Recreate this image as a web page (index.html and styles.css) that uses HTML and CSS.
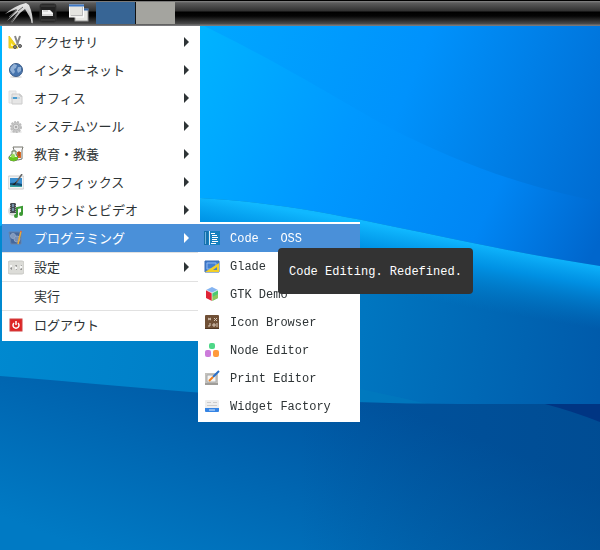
FILE: index.html
```
<!DOCTYPE html>
<html lang="ja">
<head>
<meta charset="UTF-8">
<title>LXDE</title>
<link rel="stylesheet" href="styles.css">
</head>
<body>

<!-- 壁紙 -->
<svg class="wallpaper" viewBox="0 0 600 550" preserveAspectRatio="none" aria-hidden="true">
  <defs>
    <linearGradient id="sky" gradientUnits="userSpaceOnUse" x1="190" y1="40" x2="600" y2="240">
      <stop offset="0" stop-color="#00b4ff"/>
      <stop offset=".4" stop-color="#0098ff"/>
      <stop offset=".75" stop-color="#0086f4"/>
      <stop offset="1" stop-color="#0066cc"/>
    </linearGradient>
    <linearGradient id="hill" gradientUnits="userSpaceOnUse" x1="200" y1="26" x2="600" y2="190">
      <stop offset="0" stop-color="#00a8ff"/>
      <stop offset=".5" stop-color="#0092fc"/>
      <stop offset="1" stop-color="#006cd2"/>
    </linearGradient>
    <linearGradient id="sea" gradientUnits="userSpaceOnUse" x1="0" y1="300" x2="600" y2="380">
      <stop offset="0" stop-color="#0089d0"/>
      <stop offset=".6" stop-color="#0076c0"/>
      <stop offset="1" stop-color="#005aaa"/>
    </linearGradient>
    <linearGradient id="glow" gradientUnits="userSpaceOnUse" x1="400" y1="229" x2="389" y2="294">
      <stop offset="0" stop-color="#10b8ff"/>
      <stop offset=".35" stop-color="#009cf0" stop-opacity=".8"/>
      <stop offset="1" stop-color="#0080cc" stop-opacity="0"/>
    </linearGradient>
    <linearGradient id="deep" gradientUnits="userSpaceOnUse" x1="330" y1="380" x2="240" y2="610">
      <stop offset="0" stop-color="#00539f"/>
      <stop offset="1" stop-color="#007ac4"/>
    </linearGradient>
    <linearGradient id="shade" x1="0" y1="0" x2="1" y2="0">
      <stop offset=".5" stop-color="#004688" stop-opacity="0"/>
      <stop offset="1" stop-color="#004688" stop-opacity=".5"/>
    </linearGradient>
  </defs>
  <rect width="600" height="550" fill="url(#sky)"/>
  <path d="M200 24C290 68 330 95 390 128C460 164 520 185 600 202V24Z" fill="url(#hill)"/>
  <path d="M0 226C60 204 120 196 200 198C330 205 430 240 600 266V550H0Z" fill="url(#sea)"/>
  <path d="M0 226C60 204 120 196 200 198C330 205 430 240 600 266V360H0Z" fill="url(#glow)"/>
  <path d="M200 360C350 384 440 404 600 450V550H200Z" fill="#0080bd" opacity=".4"/>
  <path d="M0 376C130 386 290 404 460 404L600 404V560H0Z" fill="url(#deep)"/>
  <path d="M0 376C130 386 290 404 460 404L600 404V560H0Z" fill="url(#shade)"/>
  <path d="M545 404H600V422Q572 411 545 404Z" fill="#003583"/>
</svg>

<header class="panel">
  <button class="launcher launcher-menu" aria-label="メニュー">
    <svg width="32" height="22" viewBox="0 0 32 22">
      <defs><linearGradient id="wing" x1="0" y1="0" x2="0" y2="1"><stop offset="0" stop-color="#eee"/><stop offset="1" stop-color="#999"/></linearGradient></defs>
      <path d="M2 12Q11 4 23 1L26 3Q30 12 30 22Q26 13 22 7L17 11 8 22 15 10 4 19 14 7Q7 9 2 12Z" fill="url(#wing)"/>
      <path d="M15 10L8 20M20 5L15 9M14 8L6 15" stroke="#666" fill="none"/>
      <path d="M24 2Q29 12 29 21" stroke="#ddd" fill="none"/>
    </svg>
  </button>
  <button class="launcher launcher-files" aria-label="ファイルマネージャ">
    <svg width="18" height="20" viewBox="0 0 18 20">
      <rect x="1" y="1" width="16" height="18" rx="2" fill="#222" stroke="#333"/>
      <path d="M2 3H16M2 17H16" stroke="#484848"/>
      <path d="M3 7H11L14 10V13H3Z" fill="#f4f4f4"/><path d="M4 8H9M3 12H14" stroke="#bbb"/>
    </svg>
  </button>
  <button class="launcher launcher-desktop" aria-label="デスクトップを表示">
    <svg width="20" height="19" viewBox="0 0 20 19">
      <rect x="6" y="5" width="13" height="12" fill="#e8e8e4" stroke="#999"/><path d="M6 5.500H19.500" stroke="#3465a4" stroke-width="2"/>
      <rect x=".5" y="1" width="14" height="12" fill="#e4e4e0" stroke="#fff"/><path d="M0 1.500H15" stroke="#3c78c8" stroke-width="2"/>
      <path d="M2 11.500H13.500V3" fill="none" stroke="#bbb"/>
    </svg>
  </button>
  <div class="pager">
    <button class="desk desk-current" aria-label="デスクトップ 1"></button>
    <button class="desk" aria-label="デスクトップ 2"></button>
  </div>
</header>

<!-- メインメニュー -->
<ul class="menu main-menu">
  <li><button class="item has-sub">
    <svg class="icon" viewBox="0 0 16 16"><path d="M1 2L10 14H1Z" fill="#f3d51c" stroke="#e3c62a"/><path d="M3 9V12H6Z" fill="#fff6b0"/><path d="M7 2L10 11M12 2L9 11" stroke="#888" stroke-width="2"/><circle cx="7" cy="13" r="1.500" fill="#888" stroke="#555"/><circle cx="12" cy="12" r="1.500" fill="#888" stroke="#555"/></svg>
    <span>アクセサリ</span></button></li>
  <li><button class="item has-sub">
    <svg class="icon" viewBox="0 0 16 16"><ellipse cx="8" cy="15" rx="6" ry="1" fill="#ddd"/><circle cx="8" cy="8" r="6.500" fill="#4674ad" stroke="#3d5d88"/><path d="M3 5L6 2 9 3 8 6 6 7 7 10 5 12 2 8ZM10 5L13 5 13 9 10 11 9 8Z" fill="#90b0d6"/></svg>
    <span>インターネット</span></button></li>
  <li><button class="item has-sub">
    <svg class="icon" viewBox="0 0 16 16"><path d="M1 1H8V13H1Z" fill="#eee" stroke="#e0e0e0"/><path d="M4 4H12L14 6V14H4Z" fill="#e6e6e6" stroke="#ccc"/><path d="M12 4V6H14" fill="#fff" stroke="#bbb"/><path d="M5 7H9V9H5Z" fill="#4a9cd0"/><path d="M3 8H5M9 8H12" stroke="#9bc2da"/></svg>
    <span>オフィス</span></button></li>
  <li><button class="item has-sub">
    <svg class="icon" viewBox="0 0 16 16"><ellipse cx="8" cy="14" rx="6" ry="1" fill="#e4e4e4"/><circle cx="8" cy="9" r="5" fill="#c9c9c9" stroke="#bcbcbc" stroke-width="2" stroke-dasharray="2 1"/><circle cx="8" cy="9" r="3" fill="#ddd" stroke="#b4b4b4"/><circle cx="8" cy="9" r="1" fill="#999"/></svg>
    <span>システムツール</span></button></li>
  <li><button class="item has-sub">
    <svg class="icon" viewBox="0 0 16 16"><path d="M5 1H15L14 4V13Q10 15 6 13V4Z" fill="#fafafa" stroke="#77776e"/><path d="M9 6H13V12H9Z" fill="#d96a25"/><path d="M11 5V10" stroke="#8b3c16"/><path d="M4 5H8V8Q11 11 9 14Q6 16 2 14Q-1 11 4 8Z" fill="#e8f5dc" stroke="#5d7150"/><path d="M1 11H10Q10 15 5 15Q1 15 1 11Z" fill="#67c51b"/><circle cx="5" cy="10" r="2" fill="#90dc4e"/></svg>
    <span>教育・教養</span></button></li>
  <li><button class="item has-sub">
    <svg class="icon" viewBox="0 0 16 16"><rect x="0" y="2" width="16" height="13" rx="1" fill="#f3f3f3" stroke="#ccc"/><path d="M2 4H14V13H2Z" fill="#3a8fd0"/><path d="M2 9Q7 8 14 10V13H2Z" fill="#16507a"/><path d="M2 11L14 12V13H2Z" fill="#39a2a0"/><path d="M14 0L8 9" stroke="#666" stroke-width="1.500"/><path d="M9 7L4 11 7 11Z" fill="#222"/></svg>
    <span>グラフィックス</span></button></li>
  <li><button class="item has-sub">
    <svg class="icon" viewBox="0 0 16 16"><circle cx="5" cy="9" r="5" fill="#ddd"/><path d="M2 1H8V11H2Z" fill="#464c53"/><path d="M4 2H6V5H4ZM4 6H6V9H4Z" fill="#7690a8"/><path d="M2.500 1V11M7.500 1V11" stroke="#999" stroke-dasharray="1 1"/><path d="M9 13V6L14 5V12" stroke="#3d9a35" stroke-width="2" fill="none"/><ellipse cx="8" cy="14" rx="2" ry="2" fill="#3d9a35"/><ellipse cx="13" cy="12" rx="2" ry="2" fill="#3d9a35"/></svg>
    <span>サウンドとビデオ</span></button></li>
  <li class="open"><button class="item has-sub">
    <svg class="icon" viewBox="0 0 16 16"><path d="M1 2H13V14H3Z" fill="#45679b" stroke="#6683aa"/><circle cx="5" cy="6" r="2.500" fill="#8199bd" stroke="#8ea4c4"/><circle cx="9" cy="9" r="3" fill="#788fb4" stroke="#8ea4c4"/><path d="M13 1L10 14" stroke="#e6a93c" stroke-width="1.500"/><path d="M12 1L14 2" stroke="#c7605b"/></svg>
    <span>プログラミング</span></button>

    <!-- サブメニュー -->
    <ul class="menu sub-menu">
      <li class="open"><button class="item" aria-describedby="tip">
        <svg class="icon" viewBox="0 0 16 16"><path d="M0 1H4V15H0Z" fill="#1672ae"/><path d="M1.500 2V14" stroke="#73b4dc"/><path d="M4 1H16V15H4Z" fill="#1680bf"/><path d="M5.500 1V15" stroke="#d9edf8"/><path d="M7 3.500H11M8 5.500H13M8 7.500H14M8 9.500H13M8 11.500H14M7 13.500H12" stroke="#fff"/></svg>
        <span>Code - OSS</span></button>
        <div class="tooltip" id="tip" role="tooltip">Code Editing. Redefined.</div></li>
      <li><button class="item">
        <svg class="icon" viewBox="0 0 16 16"><path d="M1 3H15V14H1Z" fill="#427fd1" stroke="#376bb4"/><path d="M3 5H12V8L8 11H3Z" fill="none" stroke="#91b9ee"/><path d="M1 14L15 5V14Z" fill="#f2cf28"/><path d="M9 12L13 9V12Z" fill="#4c82bd"/></svg>
        <span>Glade</span></button></li>
      <li><button class="item">
        <svg class="icon" viewBox="0 0 16 16"><path d="M8 1L14 4 8 7 2 4Z" fill="#85b4f1"/><path d="M2 4L8 7V15L2 12Z" fill="#df2435"/><path d="M14 4L8 7V15L14 12Z" fill="#4bc974"/><path d="M8 11L14 8V12L8 15Z" fill="#8dc75c"/><path d="M2 4L8 7 14 4M8 7V15" stroke="#fff" stroke-opacity=".6" fill="none"/></svg>
        <span>GTK Demo</span></button></li>
      <li><button class="item">
        <svg class="icon" viewBox="0 0 16 16"><rect x="1" y="1" width="14" height="14" rx="1" fill="#705036"/><path d="M1 14.500H15" stroke="#4f3521"/><path d="M4 4L7 6M7 4L4 6M10 4L13 7M13 4L10 7M6 9V12H4M9 10H11V12H9ZM13 9V13" fill="none" stroke="#dac9b9"/></svg>
        <span>Icon Browser</span></button></li>
      <li><button class="item">
        <svg class="icon" viewBox="0 0 16 16"><rect x="5" y="1" width="6" height="6" rx="2" fill="#4ed788"/><rect x="1" y="8" width="6" height="7" rx="2" fill="#cc7bda"/><rect x="9" y="8" width="6" height="7" rx="2" fill="#ff9a3c"/></svg>
        <span>Node Editor</span></button></li>
      <li><button class="item">
        <svg class="icon" viewBox="0 0 16 16"><path d="M1 3H14V15H1Z" fill="#c4c2bd"/><path d="M3 5H12V12H3Z" fill="#f5f5f3" stroke="#aaa"/><path d="M1 14H14" stroke="#9f9d99" stroke-width="2"/><path d="M15 1L9 7" stroke="#286fc9" stroke-width="2"/><path d="M9 7L5 11" stroke="#f27c19" stroke-width="2"/></svg>
        <span>Print Editor</span></button></li>
      <li><button class="item">
        <svg class="icon" viewBox="0 0 16 16"><rect x="1" y="2" width="14" height="12" rx="1" fill="#eee"/><path d="M3 4.500H7M9 4.500H13M3 7.500H13" stroke="#ccc"/><path d="M1 10H15V13Q15 14 14 14H2Q1 14 1 13Z" fill="#3584e4"/><path d="M5 12H11" stroke="#dcebff"/></svg>
        <span>Widget Factory</span></button></li>
    </ul>
  </li>
  <li class="line"><button class="item has-sub">
    <svg class="icon" viewBox="0 0 16 16"><rect x="0" y="2" width="16" height="13" rx="2" fill="#dcdcd8" stroke="#c8c8c4"/><path d="M3.500 6V11M8.500 6V11M13.500 6V11" stroke="#aaa"/><path d="M2 6H4V8H2ZM7 8H9V10H7ZM12 7H14V9H12Z" fill="#f7f7f7"/><path d="M3 9V10M8 6V7M13 10V11" stroke="#777"/></svg>
    <span>設定</span></button></li>
  <li class="line"><button class="item"><span class="icon"></span><span>実行</span></button></li>
  <li class="line"><button class="item">
    <svg class="icon" viewBox="0 0 16 16"><rect x="2" y="2" width="12" height="12" fill="#df2525" stroke="#d04040"/><path d="M6 6A3 3 0 1 0 10 6M8 4V8" fill="none" stroke="#fff" stroke-width="1.500"/></svg>
    <span>ログアウト</span></button></li>
</ul>

</body>
</html>
```
FILE: styles.css
```
* {
    box-sizing: border-box;
}

body {
    margin: 0;
    min-height: 100vh;
    background: #0074be;
    font-family: "Liberation Mono", "Noto Sans CJK JP", monospace;
    color: #2e3436;
}

.wallpaper {
    position: fixed;
    top: 0;
    left: 0;
    width: 100%;
    height: 100%;
    z-index: -1;
}

button {
    margin: 0;
    padding: 0;
    border: 0;
    background: none;
    color: inherit;
    font: inherit;
}

/* パネル */
.panel {
    display: flex;
    align-items: center;
    height: 26px;
    padding: 0 3px;
    border-top: 1px solid #000;
    border-bottom: 1px solid #77777a;
    background: linear-gradient(#858585 0, #5c5c5c 2px, #303030 10px, #000 11px, #050505 15px, #4c4c4c 23px, #777 24px);
}

.launcher {
    display: flex;
    align-items: center;
    justify-content: center;
}

.launcher-menu {
    width: 32px;
}

.launcher-files {
    width: 26px;
}

.launcher-desktop {
    width: 35px;
}

.pager {
    display: flex;
    gap: 1px;
    height: 22px;
    background: #111;
}

.desk {
    width: 39px;
    background: #a4a49f;
}

.desk-current {
    background: #376595;
}

/* メニュー */
.menu {
    margin: 0;
    padding: 2px 0;
    list-style: none;
    background: #fff;
}

.menu li {
    position: relative;
}

.main-menu {
    width: 198px;
    margin-left: 2px;
    font-family: "Noto Sans CJK JP", sans-serif;
    font-size: 13px;
}

.sub-menu {
    position: absolute;
    top: -2px;
    left: calc(100% - 2px);
    z-index: 1;
    width: 162px;
    font-family: "Liberation Mono", monospace;
    font-size: 12px;
}

.item {
    display: flex;
    align-items: center;
    gap: 10px;
    width: 100%;
    height: 28px;
    padding: 0 11px 0 6px;
    text-align: left;
    white-space: nowrap;
}

.item span {
    padding-bottom: 2px;
}

.sub-menu .item span {
    padding: 2px 0 0;
}

.icon {
    width: 16px;
    height: 16px;
    flex: none;
}

/* サブメニューの矢印 */
.has-sub::after {
    content: "";
    margin-left: auto;
    border: 5px solid transparent;
    border-left-color: currentColor;
    border-right: 0;
}

.line {
    border-top: 1px solid #e1e1e1;
}

.open > .item {
    background: #4a90d9;
    color: #fff;
}

.tooltip {
    position: absolute;
    top: 24px;
    left: 80px;
    z-index: 1;
    padding: 14px 11px 12px;
    border-radius: 4px;
    background: #333;
    color: #fff;
    line-height: 20px;
    white-space: nowrap;
}
```
